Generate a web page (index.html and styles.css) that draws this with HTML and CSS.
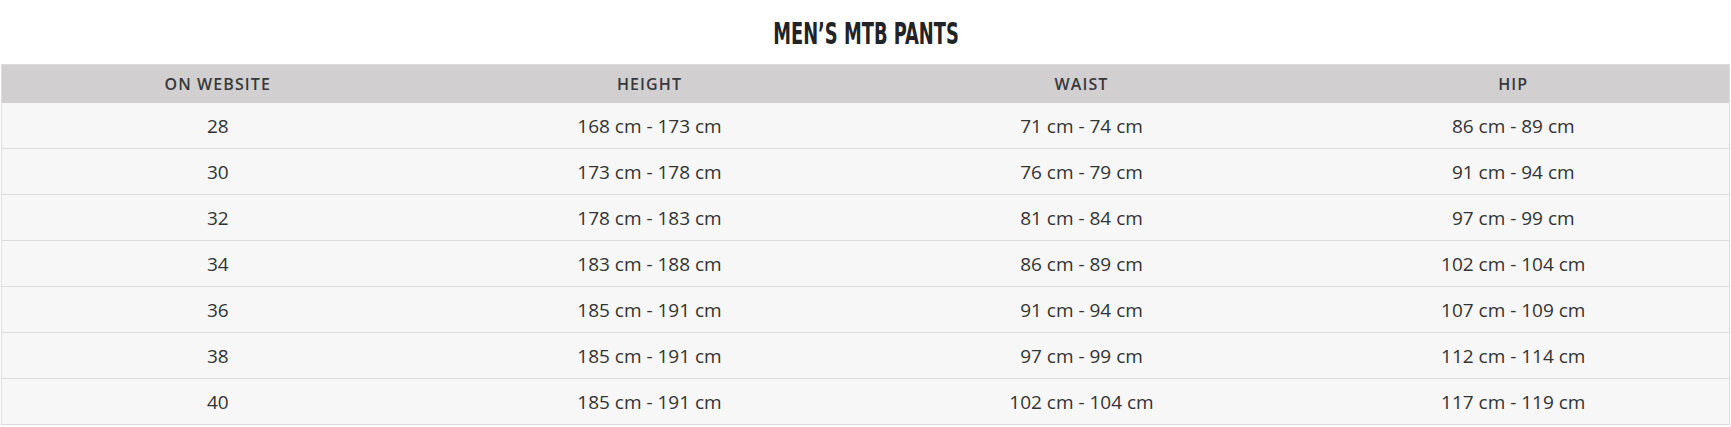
FILE: index.html
```html
<!DOCTYPE html>
<html lang="en">
<head>
<meta charset="utf-8">
<title>Men's MTB Pants size chart</title>
<link rel="stylesheet" href="styles.css">
</head>
<body>
<section class="chart">
  <h1 class="chart-title"><span class="chart-title-text">MEN’S MTB PANTS</span></h1>
  <table class="size-table">
    <thead>
      <tr><th>ON WEBSITE</th><th>HEIGHT</th><th>WAIST</th><th>HIP</th></tr>
    </thead>
    <tbody>
      <tr><td>28</td><td>168 cm - 173 cm</td><td>71 cm - 74 cm</td><td>86 cm - 89 cm</td></tr>
      <tr><td>30</td><td>173 cm - 178 cm</td><td>76 cm - 79 cm</td><td>91 cm - 94 cm</td></tr>
      <tr><td>32</td><td>178 cm - 183 cm</td><td>81 cm - 84 cm</td><td>97 cm - 99 cm</td></tr>
      <tr><td>34</td><td>183 cm - 188 cm</td><td>86 cm - 89 cm</td><td>102 cm - 104 cm</td></tr>
      <tr><td>36</td><td>185 cm - 191 cm</td><td>91 cm - 94 cm</td><td>107 cm - 109 cm</td></tr>
      <tr><td>38</td><td>185 cm - 191 cm</td><td>97 cm - 99 cm</td><td>112 cm - 114 cm</td></tr>
      <tr><td>40</td><td>185 cm - 191 cm</td><td>102 cm - 104 cm</td><td>117 cm - 119 cm</td></tr>
    </tbody>
  </table>
</section>
</body>
</html>
```
FILE: styles.css
```css
html, body {
  margin: 0;
  padding: 0;
  background: #ffffff;
}

.chart {
  padding: 0 1px;
  font-family: "Open Sans", "Liberation Sans", sans-serif;
  color: #333333;
}

.chart-title {
  margin: 0;
  height: 64px;
  display: flex;
  align-items: center;
  justify-content: center;
  font-family: "DejaVu Sans Condensed", "Liberation Sans", sans-serif;
  font-weight: 700;
  font-size: 31px;
  line-height: 1;
  color: #222326;
}

.chart-title-text {
  display: inline-block;
  transform: scaleX(0.64);
  padding-top: 2px;
}

.size-table {
  width: 100%;
  table-layout: fixed;
  border-collapse: collapse;
  border: 1px solid #dddddd;
}

.size-table th {
  height: 38px;
  padding: 0;
  background: #d1cfd0;
  font-size: 16px;
  font-weight: 600;
  letter-spacing: 1.1px;
  color: #38383b;
  text-align: center;
  vertical-align: middle;
}

.size-table td {
  height: 45px;
  padding: 0;
  background: #f7f7f7;
  border-bottom: 1px solid #dddddd;
  font-size: 19px;
  font-weight: 400;
  color: #333333;
  text-align: center;
  vertical-align: middle;
}
```
